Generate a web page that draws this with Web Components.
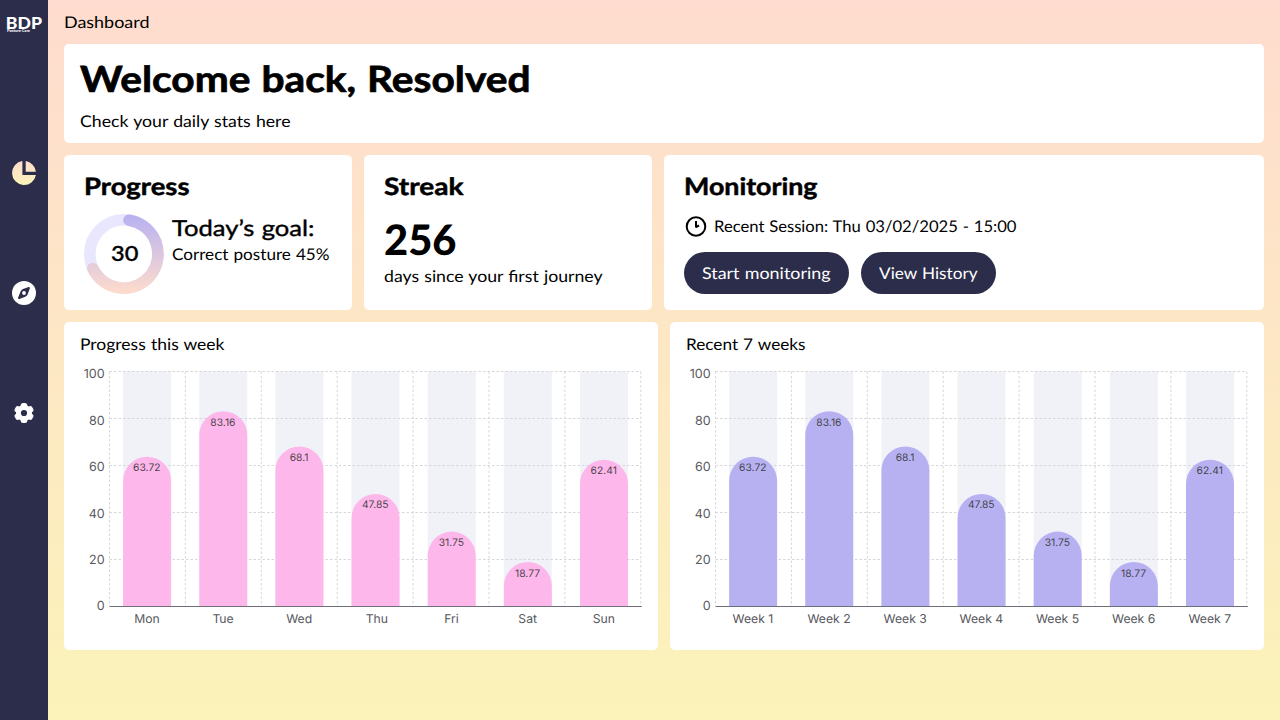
<!DOCTYPE html>
<html lang="en">
<head>
<meta charset="utf-8">
<title>Dashboard</title>
<style>
html,body{margin:0;height:100%}
body{font-family:Lato,"Noto Sans",sans-serif;color:#000;overflow:hidden}
</style>
</head>
<body>
<posture-app></posture-app>
<script>
// One line of text set to a fixed advance width.
class FitText extends HTMLElement{
  connectedCallback(){
    const a=n=>this.getAttribute(n);
    const h=+a('height'),w=+a('width');
    this.attachShadow({mode:'open'}).innerHTML=`<style>
      :host{display:block;width:${w}px;height:${h}px;flex:none}
      svg{display:block;overflow:visible}
      text{font-size:${a('size')}px;font-weight:${a('weight')||400};fill:currentColor;word-spacing:${a('space')||.6}px;stroke:currentColor;stroke-width:${a('stroke')||0};text-rendering:geometricPrecision}
    </style><svg width="${w}" height="${h}"><text x="0" y="${a('base')}" textLength="${w-.5}" lengthAdjust="spacingAndGlyphs">${a('text')}</text></svg>`;
  }
}
customElements.define('fit-text',FitText);

class UiCard extends HTMLElement{
  constructor(){super();this.attachShadow({mode:'open'}).innerHTML=`<style>
    :host{display:flex;flex-direction:column;align-items:flex-start;box-sizing:border-box;background:#fff;border-radius:5px;min-width:0}
    </style><slot></slot>`}
}
customElements.define('ui-card',UiCard);

class PillButton extends HTMLElement{
  constructor(){super();this.attachShadow({mode:'open'}).innerHTML=`<style>
    :host{display:block}
    button{all:unset;display:flex;align-items:center;height:42px;padding:0 18px;border-radius:21px;background:#2c2d4a;color:#fff;cursor:pointer}
    </style><button><slot></slot></button>`}
}
customElements.define('pill-button',PillButton);

class SideBar extends HTMLElement{
  constructor(){super();this.attachShadow({mode:'open'}).innerHTML=`<style>
    :host{display:flex;flex-direction:column;align-items:center;width:48px;height:100%;background:#2c2d4a;color:#fff;flex:none}
    .logo{height:48px;width:48px;margin-bottom:113px}
    nav{display:flex;flex-direction:column;gap:96px}
    svg{display:block}
    .logo text{fill:#fff;font-family:Lato,sans-serif;font-weight:900}
    </style>
    <svg class="logo" viewBox="0 0 48 48"><text x="5.8" y="28.5" font-size="16" textLength="36.2" lengthAdjust="spacingAndGlyphs">BDP</text><text x="7" y="32.4" font-size="3.8" textLength="23" lengthAdjust="spacingAndGlyphs">Posture Care</text></svg>
    <nav>
    <svg width="24" height="24" viewBox="0 0 24 24"><defs><linearGradient id="g" x1="0" y1="0" x2="0" y2="24" gradientUnits="userSpaceOnUse"><stop stop-color="#ffdccc"/><stop offset="1" stop-color="#fbf3b9"/></linearGradient></defs><path fill="url(#g)" d="M10.4 0.1A12 12 0 1 0 23.9 14H10.4ZM13.7 0.1V10.7H23.9A12 12 0 0 0 13.7 0.1Z"/></svg>
    <svg width="24" height="24" viewBox="0 0 24 24"><circle cx="12" cy="12" r="12" fill="#fff"/><path fill="#2c2d4a" d="M16.7 6.1 11 8.1Q9.3 8.8 8.6 10.4L6.1 16.5Q5.7 18.3 7.4 17.9L13.3 15.7Q14.9 14.9 15.6 13.4L17.8 7.6Q18.2 5.8 16.7 6.1Z"/><circle cx="12" cy="12" r="1.9" fill="#fff"/></svg>
    <svg width="24" height="24" viewBox="0 0 24 24"><g fill="#fff"><circle cx="12" cy="12" r="8"/><rect x="8.7" y="2" width="6.6" height="20" rx="2.5"/><rect x="8.7" y="2" width="6.6" height="20" rx="2.5" transform="rotate(60 12 12)"/><rect x="8.7" y="2" width="6.6" height="20" rx="2.5" transform="rotate(120 12 12)"/></g><circle cx="12" cy="12" r="3.1" fill="#2c2d4a"/></svg>
    </nav>`}
}
customElements.define('side-bar',SideBar);

class ProgressRing extends HTMLElement{
  constructor(){super();this.attachShadow({mode:'open'}).innerHTML=`<style>
    :host{display:block;width:80px;height:80px;flex:none}svg{display:block}
    text{font-size:22px;font-weight:500;stroke:#000;stroke-width:.35}
    </style><svg width="80" height="80"><defs><linearGradient id="r" x1="0" y1="0" x2="0" y2="80" gradientUnits="userSpaceOnUse"><stop stop-color="#b7b1f2"/><stop offset="1" stop-color="#ffdccc"/></linearGradient></defs>
    <circle cx="40" cy="40" r="34.2" fill="none" stroke="#e9e7fd" stroke-width="11.6"/>
    <path d="M45 6.2A34.2 34.2 0 1 1 8.8 54.6" fill="none" stroke="url(#r)" stroke-width="11.6" stroke-linecap="round"/>
    <text x="27" y="47.4" textLength="27.4" lengthAdjust="spacingAndGlyphs">30</text></svg>`}
}
customElements.define('progress-ring',ProgressRing);

class BarChart extends HTMLElement{
  connectedCallback(){
    const vals=[63.72,83.16,68.1,47.85,31.75,18.77,62.41];
    const names=this.getAttribute('labels').split(',');
    const color=this.getAttribute('color');
    const X=29.5,T=9.5,B=244,S=75.9,P=76.15,F=43.1;
    let s='';
    vals.forEach((v,i)=>{s+=`<rect x="${F+P*i}" y="${T}" width="48" height="${B-T}" fill="#f1f2f8"/>`});
    for(let i=0;i<5;i++){const y=T+i*47;s+=`<path class="g" d="M${X} ${y}H${X+S*7}"/>`}
    for(let i=0;i<8;i++){const x=X+i*S;s+=`<path class="g" d="M${x} ${T}V${B}"/>`}
    s+=`<path d="M${X} ${B+.5}H${X+S*7+1}" stroke="#6e7079"/>`;
    vals.forEach((v,i)=>{
      const x=F+P*i,y=B-v*2.343,c=x+24;
      s+=`<path fill="${color}" d="M${x} ${B}V${y+24}a24 24 0 0 1 48 0V${B}Z"/>
      <text class="v" x="${c-.3}" y="${y+14.5}">${v}</text><text x="${c+(names[i]==='Thu'?1.3:-.2)}" y="261">${names[i]}</text>`});
    for(let i=0;i<6;i++)s+=`<text class="y" x="24.6" y="${16.3+i*46.4}">${100-i*20}</text>`;
    this.attachShadow({mode:'open'}).innerHTML=`<style>
      :host{display:block;width:561px;height:270px}
      svg{display:block;overflow:visible}
      text{font:12.2px Inter,sans-serif;fill:#56575c;text-anchor:middle;text-rendering:geometricPrecision}
      .y{text-anchor:end;font-size:12.5px}.v{font-size:10.3px;fill:#333;fill-opacity:.9}
      .g{stroke:#d6d7da;stroke-dasharray:2.5 2;fill:none}
    </style><svg width="561" height="270">${s}</svg>`;
  }
}
customElements.define('bar-chart',BarChart);

class PostureApp extends HTMLElement{
  constructor(){super();this.attachShadow({mode:'open'}).innerHTML=`<style>
    :host{display:flex;width:100vw;height:100vh;background:linear-gradient(#ffdccf,#fbf3b9)}
    main{flex:1;min-width:0;box-sizing:border-box;padding:0 16px;display:flex;flex-direction:column}
    header{height:44px}
    .welcome{height:99px;padding:0 16px;margin-bottom:12px}
    .stats{display:grid;grid-template-columns:288px 288px 1fr;gap:12px;height:155px;margin-bottom:12px}
    .stats ui-card{padding:16px 20px 0}
    .charts{display:grid;grid-template-columns:1fr 1fr;gap:12.8px;height:328px}
    .charts ui-card{padding:10px 16px 0}
    .row{display:flex}
    .goal{gap:8px;padding-top:11px}
    .session{align-items:center;gap:6px;height:24px;margin:12px 0 13px}
    .buttons{gap:12px}
    .clock{display:block;flex:none}
    </style>
    <side-bar></side-bar>
    <main>
      <header><fit-text text="Dashboard" size="16.2" width="86" height="44" base="28"></fit-text></header>
      <ui-card class="welcome">
        <fit-text text="Welcome back, Resolved" size="36" weight="700" stroke=".7" space="1" width="451" height="60" base="48"></fit-text>
        <fit-text text="Check your daily stats here" size="16.2" width="211" height="30" base="23"></fit-text>
      </ui-card>
      <section class="stats">
        <ui-card>
          <fit-text text="Progress" size="24" weight="700" stroke=".5" width="106" height="32" base="24.1"></fit-text>
          <div class="row goal"><progress-ring></progress-ring>
            <div><fit-text text="Today’s goal:" size="22" weight="400" stroke=".4" width="143" height="28" base="22"></fit-text>
            <fit-text text="Correct posture 45%" size="16.2" width="158" height="26" base="18"></fit-text></div>
          </div>
        </ui-card>
        <ui-card>
          <fit-text text="Streak" size="24" weight="700" stroke=".5" width="80" height="32" base="24.1"></fit-text>
          <fit-text text="256" size="42" weight="900" width="73" height="64" base="52.4"></fit-text>
          <fit-text text="days since your first journey" size="16.2" width="219" height="26" base="15"></fit-text>
        </ui-card>
        <ui-card>
          <fit-text text="Monitoring" size="24" weight="700" stroke=".5" width="134" height="32" base="24.1"></fit-text>
          <div class="row session">
            <svg class="clock" width="24" height="24" fill="none" stroke="#000" stroke-width="2"><circle cx="12" cy="11.5" r="9.3"/><path d="M12 6V11.8M11.4 12.4 15 10.5"/></svg>
            <fit-text text="Recent Session: Thu 03/02/2025 - 15:00" size="16.2" width="303" height="24" base="17.3"></fit-text>
          </div>
          <div class="row buttons">
            <pill-button><fit-text text="Start monitoring" size="16.2" width="129" height="42" base="27"></fit-text></pill-button>
            <pill-button><fit-text text="View History" size="16.2" width="99" height="42" base="27"></fit-text></pill-button>
          </div>
        </ui-card>
      </section>
      <section class="charts">
        <ui-card><fit-text text="Progress this week" size="16.2" width="145" height="30" base="18"></fit-text><bar-chart color="#fdb7ea" labels="Mon,Tue,Wed,Thu,Fri,Sat,Sun"></bar-chart></ui-card>
        <ui-card><fit-text text="Recent 7 weeks" size="16.2" width="120" height="30" base="18"></fit-text><bar-chart color="#b7b1f2" labels="Week 1,Week 2,Week 3,Week 4,Week 5,Week 6,Week 7"></bar-chart></ui-card>
      </section>
    </main>`}
}
customElements.define('posture-app',PostureApp);
</script>
</body>
</html>
